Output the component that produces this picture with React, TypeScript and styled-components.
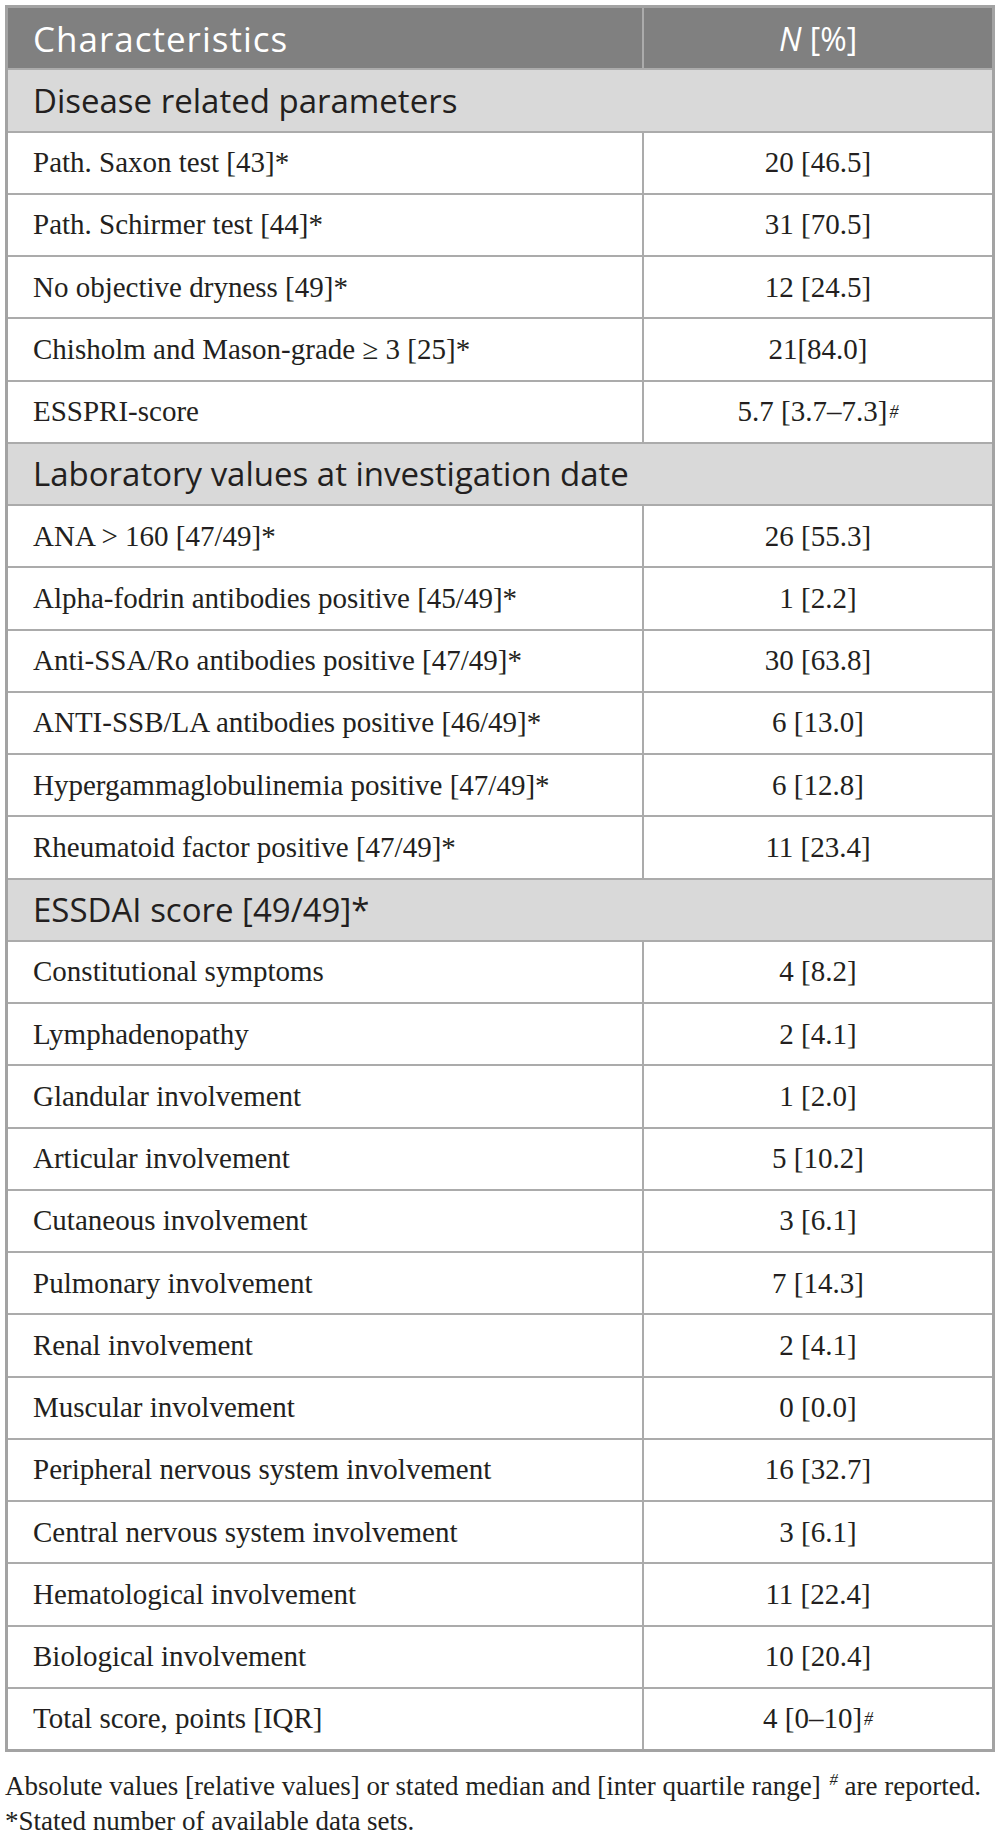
import styled, { createGlobalStyle } from "styled-components";

const GlobalStyle = createGlobalStyle`
  html, body {
    margin: 0;
    padding: 0;
    background: #ffffff;
  }
`;

const Page = styled.div`
  padding: 5px 0 0 5px;
  width: 990px;
`;

const Table = styled.div`
  display: flex;
  flex-direction: column;
  border: 3px solid #a3a3a3;
  gap: 2px;
  background: #ababab;
`;

const Row = styled.div`
  display: grid;
  grid-template-columns: 634px 1fr;
  column-gap: 2px;
  height: 60.25px;
`;

const Cell = styled.div<{ $center?: boolean }>`
  display: flex;
  align-items: center;
  justify-content: ${(p) => (p.$center ? "center" : "flex-start")};
  padding-left: ${(p) => (p.$center ? "0" : "25px")};
  background: #ffffff;
  font-family: "Liberation Serif", "Times New Roman", serif;
  font-size: 29px;
  color: #231f20;
  white-space: nowrap;
`;

const HeadCell = styled(Cell)<{ $size?: number; $spacing?: number }>`
  font-family: "Open Sans", "Noto Sans", sans-serif;
  font-size: ${(p) => p.$size || 33}px;
  letter-spacing: ${(p) => p.$spacing || 0}px;
  color: #ffffff;
  background: #808080;
`;

const SectionRow = styled.div`
  display: flex;
  align-items: center;
  height: 60.25px;
  padding-left: 25px;
  background: #d9d9d9;
  font-family: "Open Sans", "Noto Sans", sans-serif;
  font-size: 33px;
  color: #231f20;
`;

const Sup = styled.sup`
  font-size: 0.62em;
  font-style: italic;
  line-height: 0;
  vertical-align: 0.62em;
  margin-left: 2px;
`;

const Notes = styled.div`
  margin-top: 17px;
  font-family: "Liberation Serif", "Times New Roman", serif;
  font-size: 27px;
  line-height: 35px;
  color: #231f20;
  white-space: nowrap;
`;

type Item = { label: string; value: string; hash?: boolean };
type Section = { title: string; items: Item[] };

const sections: Section[] = [
  {
    title: "Disease related parameters",
    items: [
      { label: "Path. Saxon test [43]*", value: "20 [46.5]" },
      { label: "Path. Schirmer test [44]*", value: "31 [70.5]" },
      { label: "No objective dryness [49]*", value: "12 [24.5]" },
      { label: "Chisholm and Mason-grade \u2265 3 [25]*", value: "21[84.0]" },
      { label: "ESSPRI-score", value: "5.7 [3.7\u20137.3]", hash: true },
    ],
  },
  {
    title: "Laboratory values at investigation date",
    items: [
      { label: "ANA > 160 [47/49]*", value: "26 [55.3]" },
      { label: "Alpha-fodrin antibodies positive [45/49]*", value: "1 [2.2]" },
      { label: "Anti-SSA/Ro antibodies positive [47/49]*", value: "30 [63.8]" },
      { label: "ANTI-SSB/LA antibodies positive [46/49]*", value: "6 [13.0]" },
      { label: "Hypergammaglobulinemia positive [47/49]*", value: "6 [12.8]" },
      { label: "Rheumatoid factor positive [47/49]*", value: "11 [23.4]" },
    ],
  },
  {
    title: "ESSDAI score [49/49]*",
    items: [
      { label: "Constitutional symptoms", value: "4 [8.2]" },
      { label: "Lymphadenopathy", value: "2 [4.1]" },
      { label: "Glandular involvement", value: "1 [2.0]" },
      { label: "Articular involvement", value: "5 [10.2]" },
      { label: "Cutaneous involvement", value: "3 [6.1]" },
      { label: "Pulmonary involvement", value: "7 [14.3]" },
      { label: "Renal involvement", value: "2 [4.1]" },
      { label: "Muscular involvement", value: "0 [0.0]" },
      { label: "Peripheral nervous system involvement", value: "16 [32.7]" },
      { label: "Central nervous system involvement", value: "3 [6.1]" },
      { label: "Hematological involvement", value: "11 [22.4]" },
      { label: "Biological involvement", value: "10 [20.4]" },
      { label: "Total score, points [IQR]", value: "4 [0\u201310]", hash: true },
    ],
  },
];

export default function App() {
  return (
    <Page>
      <GlobalStyle />
      <Table>
        <Row>
          <HeadCell $size={35} $spacing={1}>
            Characteristics
          </HeadCell>
          <HeadCell $center $size={32}>
            <i>N</i>&nbsp;[%]
          </HeadCell>
        </Row>
        {sections.map((s) => (
          <>
            <SectionRow key={s.title}>{s.title}</SectionRow>
            {s.items.map((it) => (
              <Row key={it.label}>
                <Cell>{it.label}</Cell>
                <Cell $center>
                  {it.value}
                  {it.hash && <Sup>#</Sup>}
                </Cell>
              </Row>
            ))}
          </>
        ))}
      </Table>
      <Notes>
        <div>
          Absolute values [relative values] or stated median and [inter quartile range] <Sup>#</Sup> are reported.
        </div>
        <div>*Stated number of available data sets.</div>
      </Notes>
    </Page>
  );
}
